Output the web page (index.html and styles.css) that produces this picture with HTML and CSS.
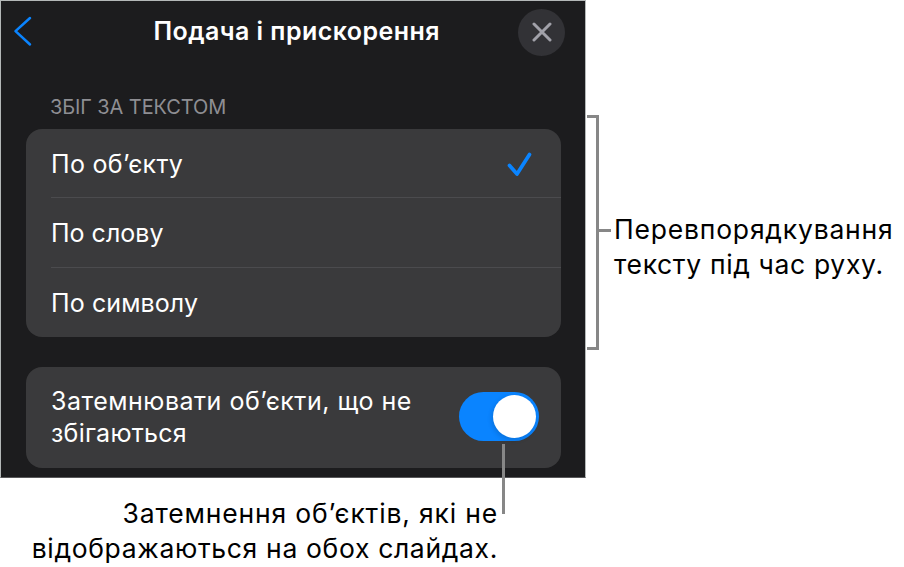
FILE: index.html
```
<!DOCTYPE html>
<html lang="uk">

<head>
    <meta charset="UTF-8">
    <meta name="viewport" content="width=device-width, initial-scale=1.0">
    <title>Подача і прискорення</title>
    <link rel="stylesheet" href="styles.css">
</head>

<body>
    <div class="figure">
        <main class="panel">
            <header class="panel-header">
                <svg class="icon-back" viewBox="0 0 20 32" aria-label="Назад">
                    <path d="M17 2 L2.5 15.2 L17 28.5" />
                </svg>
                <h1 class="title">Подача і прискорення</h1>
                <button type="button" class="btn-close" aria-label="Закрити">
                    <svg class="icon-close" viewBox="0 0 20 20">
                        <path d="M2 2 L18 18 M18 2 L2 18" />
                    </svg>
                </button>
            </header>

            <h2 class="section-title">ЗБІГ ЗА ТЕКСТОМ</h2>
            <ul class="group">
                <li class="row">
                    <span class="txt-object">По об’єкту</span>
                    <svg class="icon-check" viewBox="0 0 26 26">
                        <path d="M2.5 14.5 L10 23 L22.5 3.5" />
                    </svg>
                </li>
                <li class="row"><span class="txt-word">По слову</span></li>
                <li class="row"><span class="txt-symbol">По символу</span></li>
            </ul>

            <div class="group group-toggle">
                <p class="toggle-text"><span class="txt-toggle-1">Затемнювати об’єкти, що не</span><br><span class="txt-toggle-2">збігаються</span></p>
                <div class="toggle" role="switch" aria-checked="true">
                    <span class="knob"></span>
                    <span class="leader"></span>
                </div>
            </div>
        </main>

        <aside class="callout-side">
            <div class="bracket"></div>
            <div class="stem"></div>
            <p class="callout"><span class="txt-side-1">Перевпорядкування</span><br><span class="txt-side-2">тексту під час руху.</span></p>
        </aside>

        <p class="callout callout-bottom"><span class="txt-bottom-1">Затемнення об’єктів, які не</span><br><span class="txt-bottom-2">відображаються на обох слайдах.</span></p>
    </div>
</body>

</html>
```
FILE: styles.css
```
* {
    box-sizing: border-box;
    margin: 0;
    padding: 0;
}

body {
    background-color: #fff;
    font-family: Inter, "Liberation Sans", sans-serif;
    color: #000;
}

.figure {
    display: grid;
    grid-template-columns: 586px 318px;
    grid-template-rows: 478px 89px;
    width: 904px;
    height: 567px;
}

.panel {
    padding: 0 24px 0 25px;
    border: 1px solid #b4b8b8;
    border-bottom-color: #58585a;
    background-color: #1c1c1e;
    color: #fff;
}

.panel-header {
    display: flex;
    align-items: center;
    justify-content: space-between;
    height: 62px;
    margin: 0 -5px 0 -13px;
}

.title {
    margin-left: 42px;
    padding-bottom: 2px;
    font-size: 25px;
    font-weight: 600;
    line-height: 30px;
    letter-spacing: 0.45px;
    white-space: nowrap;
}

.icon-back {
    width: 20px;
    height: 32px;
    fill: none;
    stroke: #0a84ff;
    stroke-width: 2.5;
    stroke-linecap: round;
    stroke-linejoin: round;
}

.btn-close {
    display: flex;
    align-items: center;
    justify-content: center;
    width: 47px;
    height: 47px;
    margin-right: 0.6px;
    border: none;
    border-radius: 50%;
    background-color: #323236;
}

.icon-close {
    width: 20px;
    height: 20px;
    fill: none;
    stroke: #a1a1a9;
    stroke-width: 3;
    stroke-linecap: round;
}

.section-title {
    height: 66px;
    padding: 32px 0 0 24px;
    color: #8e8e93;
    font-size: 20px;
    font-weight: 400;
    line-height: 24px;
    letter-spacing: -0.1px;
    white-space: nowrap;
}

.group {
    border-radius: 16px;
    background-color: #3a3a3c;
    list-style: none;
}

.row {
    display: flex;
    align-items: center;
    justify-content: space-between;
    height: 69px;
    margin-left: 25px;
    padding: 2px 28px 0 0;
    border-bottom: 1px solid #4b4b4e;
    font-size: 25px;
    white-space: nowrap;
}

.row:nth-child(2) {
    height: 70px;
    padding-top: 1px;
}

.row:last-child {
    padding-top: 0;
    border-bottom: none;
}

.txt-object {
    letter-spacing: 0.3px;
}

.txt-symbol {
    letter-spacing: 0.1px;
}

.icon-check {
    width: 26px;
    height: 26px;
    fill: none;
    stroke: #0a84ff;
    stroke-width: 3.7;
    stroke-linecap: round;
    stroke-linejoin: round;
}

.group-toggle {
    display: flex;
    align-items: center;
    justify-content: space-between;
    height: 101px;
    margin-top: 29.5px;
    padding: 0 22px 0 25px;
}

.toggle-text {
    font-size: 25px;
    line-height: 32px;
    white-space: nowrap;
}

.txt-toggle-1 {
    letter-spacing: 0.5px;
}

.txt-toggle-2 {
    letter-spacing: 0.25px;
}

.toggle {
    position: relative;
    display: flex;
    justify-content: flex-end;
    width: 80px;
    height: 49px;
    margin-bottom: 1px;
    padding: 3px;
    border-radius: 25px;
    background-color: #0a84ff;
}

.knob {
    width: 43px;
    height: 43px;
    border-radius: 50%;
    background-color: #fff;
    box-shadow: -1px 2px 5px rgba(0, 0, 0, 0.15);
}

/* line from the switch down to its caption */
.leader {
    position: absolute;
    top: 52px;
    left: 43px;
    width: 3px;
    height: 70px;
    background-color: #878787;
}

.callout-side {
    display: flex;
    align-items: center;
    height: 235px;
    margin-top: 115px;
}

.bracket {
    width: 12px;
    height: 235px;
    margin-left: 1px;
    border: 3px solid #878787;
    border-left: none;
}

.stem {
    width: 12px;
    height: 3px;
    margin-top: -4px;
    background-color: #878787;
}

.callout {
    font-size: 26.5px;
    line-height: 35px;
    white-space: nowrap;
}

.callout-side .callout {
    margin: 28px 0 0 3px;
}

.txt-side-1 {
    letter-spacing: 0.8px;
}

.txt-side-2 {
    letter-spacing: 0.65px;
}

.callout-bottom {
    width: 498px;
    padding-top: 18px;
    text-align: right;
}

.txt-bottom-1 {
    letter-spacing: 0.83px;
}

.txt-bottom-2 {
    letter-spacing: 0.66px;
}
```
